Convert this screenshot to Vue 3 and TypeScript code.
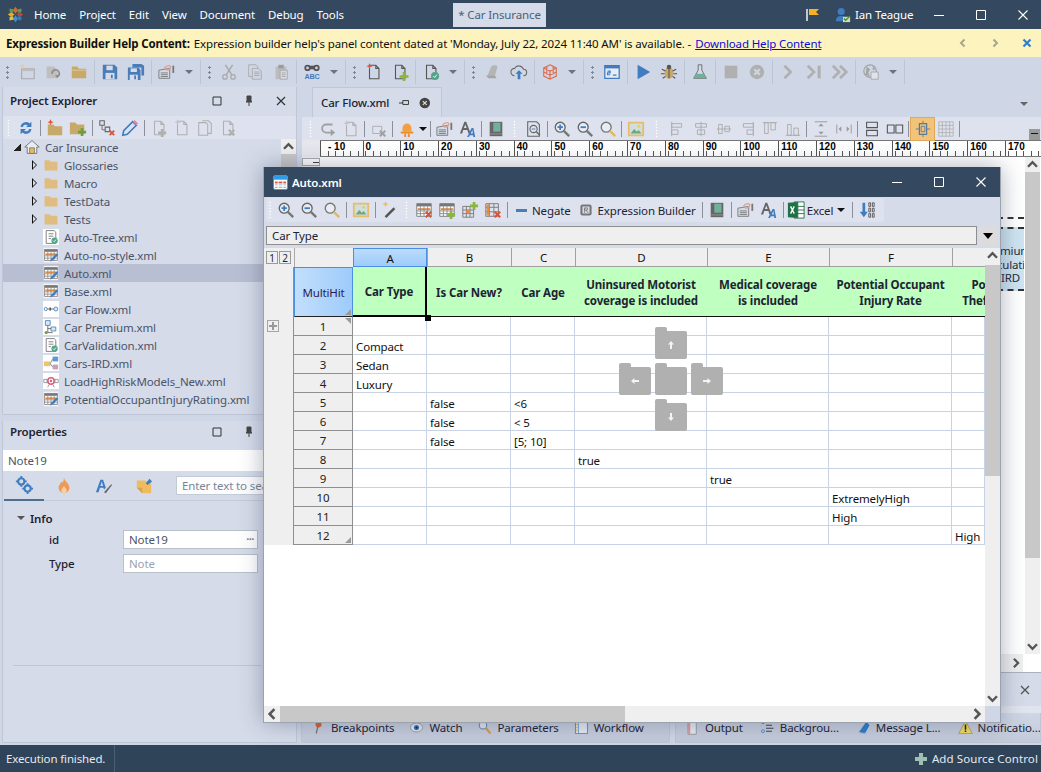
<template>
  <div class="app">
    <header class="titlebar">
      <svg class="logo" viewBox="0 0 20 20">
        <path d="M10 1l3 4-3 4-3-4z" fill="#d9633a" />
        <path d="M1 10l4-3 4 3-4 3z" fill="#e5a92f" />
        <path d="M19 10l-4-3-4 3 4 3z" fill="#c0453f" />
        <path d="M10 19l3-4-3-4-3 4z" fill="#3f8fd0" />
        <path d="M3 3l5 1-1 4-4-1zM17 3l-5 1 1 4 4-1z" fill="#5e9e4a" />
        <path d="M3 17l5-1-1-4-4 1z" fill="#e2c23a" />
        <path d="M17 17l-5-1 1-4 4 1z" fill="#2f7fbf" />
      </svg>
      <nav class="menu">
        <span v-for="m in menu" :key="m">{{ m }}</span>
      </nav>
      <div class="doc-tab">* Car Insurance</div>
      <svg class="flag" viewBox="0 0 14 14">
        <path d="M1 1v12" stroke="#f2f2f2" stroke-width="1.5" />
        <path d="M3 1h10l-3 3 3 3H3z" fill="#f5b324" />
      </svg>
      <svg class="user" viewBox="0 0 18 18">
        <circle cx="7" cy="5" r="4" fill="#3f7cc0" />
        <path d="M1 16c0-5 3-6 6-6s5 1 6 3v3z" fill="#3f7cc0" />
        <path d="M9 11h8v6H9z" fill="#cfe0a0" />
        <path d="M10 13l2 2 5-5" stroke="#3e8e45" stroke-width="1.5" fill="none" />
      </svg>
      <span class="user-name">Ian Teague</span>
      <div class="win-btns">
        <svg viewBox="0 0 12 12"><path d="M1 6.5h10" stroke="#fff" /></svg>
        <svg viewBox="0 0 12 12"><path d="M1.5 1.5h9v9h-9z" stroke="#fff" fill="none" /></svg>
        <svg viewBox="0 0 12 12"><path d="M1.5 1.5l9 9M10.5 1.5l-9 9" stroke="#fff" stroke-width="1.1" /></svg>
      </div>
    </header>

    <div class="notice">
      <b>Expression Builder Help Content:</b>
      <span class="notice-msg">Expression builder help's panel content dated at 'Monday, July 22, 2024 11:40 AM' is available. -</span>
      <a class="notice-link">Download Help Content</a>
      <div class="notice-nav">
        <svg viewBox="0 0 10 10"><path d="M6.5 1.5L3 5l3.5 3.5" stroke="#a7a48f" stroke-width="2" fill="none" /></svg>
        <svg viewBox="0 0 10 10"><path d="M3.5 1.5L7 5 3.5 8.5" stroke="#a7a48f" stroke-width="2" fill="none" /></svg>
        <svg viewBox="0 0 10 10"><path d="M1.5 1.5l7 7M8.5 1.5l-7 7" stroke="#2f7fd0" stroke-width="2.2" /></svg>
      </div>
    </div>

    <div class="toolbar main-tools">
      <template v-for="(t, i) in mainTools" :key="i">
        <i v-if="t === 'g'" class="grip"></i>
        <i v-else-if="t === 's'" class="sep"></i>
        <i v-else-if="t === 'c'" class="caret"></i>
        <span v-else class="btn"><svg class="ic" viewBox="0 0 20 20" v-html="icons[t]"></svg></span>
      </template>
    </div>

    <main class="workspace">
      <aside class="left">
        <section class="explorer">
          <div class="panel-head">
            <strong>Project Explorer</strong>
            <svg viewBox="0 0 12 12"><path d="M2 2h8v8H2z" fill="none" stroke="#333" /></svg>
            <svg viewBox="0 0 12 12"><path d="M4 1h4v5l1 1H3l1-1zM6 7v4" fill="#444" stroke="#444" /></svg>
            <svg viewBox="0 0 12 12"><path d="M2 2l8 8M10 2l-8 8" stroke="#333" stroke-width="1.2" /></svg>
          </div>
          <div class="toolbar sub-tools">
            <template v-for="(t, i) in explorerTools" :key="i">
              <i v-if="t === 'g'" class="grip dotted"></i>
              <i v-else-if="t === 's'" class="sep dark"></i>
              <span v-else class="btn small"><svg class="ic" viewBox="0 0 20 20" v-html="icons[t]"></svg></span>
            </template>
          </div>
          <div class="tree-wrap">
            <ul class="tree">
              <li v-for="n in tree" :key="n.name" class="tree-row" :class="[`lvl-${n.level}`, { selected: n.name === 'Auto.xml' }]">
                <i v-if="n.level === 0" class="arrow open"></i>
                <i v-else-if="n.folder" class="arrow"></i>
                <svg class="tree-ic" viewBox="0 0 20 20" v-html="icons[n.icon]"></svg>
                <span>{{ n.name }}</span>
              </li>
            </ul>
            <div class="vscroll tree-scroll">
              <svg viewBox="0 0 10 10"><path d="M2 6.5L5 3.5l3 3" stroke="#555" stroke-width="1.6" fill="none" /></svg>
              <i class="thumb"></i>
            </div>
          </div>
        </section>

        <section class="props">
          <div class="panel-head">
            <strong>Properties</strong>
            <svg viewBox="0 0 12 12"><path d="M2 2h8v8H2z" fill="none" stroke="#333" /></svg>
            <svg viewBox="0 0 12 12"><path d="M4 1h4v5l1 1H3l1-1zM6 7v4" fill="#444" stroke="#444" /></svg>
            <svg viewBox="0 0 12 12"><path d="M2 2l8 8M10 2l-8 8" stroke="#333" stroke-width="1.2" /></svg>
          </div>
          <div class="props-name">Note19</div>
          <div class="props-tabs">
            <span class="props-tab active"><svg class="ic" viewBox="0 0 20 20" v-html="icons.gears"></svg></span>
            <span class="props-tab"><svg class="ic" viewBox="0 0 20 20" v-html="icons.flame"></svg></span>
            <span class="props-tab"><svg class="ic" viewBox="0 0 20 20" v-html="icons.fontBrush"></svg></span>
            <span class="props-tab"><svg class="ic" viewBox="0 0 20 20" v-html="icons.sticky"></svg></span>
            <div class="props-search">Enter text to search</div>
          </div>
          <div class="props-body">
            <div class="props-group"><i></i>Info</div>
            <div class="props-row">
              <label>id</label>
              <div class="props-val">Note19<em>•••</em></div>
            </div>
            <div class="props-row">
              <label>Type</label>
              <div class="props-val ro">Note</div>
            </div>
            <hr class="props-line" />
          </div>
        </section>
      </aside>

      <div class="right">
        <div class="tabstrip">
          <div class="file-tab">
            <span>Car Flow.xml</span>
            <svg viewBox="0 0 12 12"><path d="M1 6h4M5 3.5h6v4H5z" stroke="#333" fill="none" /></svg>
            <svg viewBox="0 0 12 12"><circle cx="6" cy="6" r="5.5" fill="#444" /><path d="M4 4l4 4M8 4l-4 4" stroke="#ddd" stroke-width="1.3" /></svg>
          </div>
          <i class="strip-caret"></i>
        </div>
        <div class="toolbar editor-tools">
          <template v-for="(t, i) in editorTools" :key="i">
            <i v-if="t === 'g' || t === 'G'" class="grip dotted" :class="{ wide: t === 'G' }"></i>
            <i v-else-if="t === 's'" class="sep dark"></i>
            <i v-else-if="t === 'c'" class="caret black"></i>
            <span v-else class="btn small" :class="{ on: t === 'snap' }"><svg class="ic" viewBox="0 0 20 20" v-html="icons[t]"></svg></span>
          </template>
          <i class="ed-more"></i>
        </div>
        <div class="ruler-row">
          <div class="ruler-corner"></div>
          <div class="ruler">
            <span v-for="r in rulerMarks" :key="r" class="mark" :class="{ first: r === -10 }">{{ r === -10 ? '- 10' : r }}</span>
          </div>
        </div>
        <div class="canvas-row">
          <div class="canvas-gutter"><i></i></div>
          <div class="canvas">
            <div class="note-node">
              <span>Premium</span>
              <span>Calculation</span>
              <span>IRD</span>
            </div>
          </div>
          <div class="vscroll canvas-scroll">
            <svg viewBox="0 0 10 10"><path d="M2 6.5L5 3.5l3 3" stroke="#555" stroke-width="1.6" fill="none" /></svg>
            <i class="thumb"></i>
            <svg class="down" viewBox="0 0 10 10"><path d="M2 3.5L5 6.5l3-3" stroke="#555" stroke-width="1.6" fill="none" /></svg>
          </div>
        </div>
        <div class="canvas-hbar">
          <svg viewBox="0 0 10 10"><path d="M3.5 2L6.5 5l-3 3" stroke="#555" stroke-width="1.6" fill="none" /></svg>
          <i></i>
        </div>
        <div class="bottom">
          <div class="bottom-top">
            <svg viewBox="0 0 12 12"><path d="M2 2l8 8M10 2l-8 8" stroke="#555" stroke-width="1.3" /></svg>
          </div>
          <div class="bottom-strip"></div>
          <div class="bottom-tabs">
            <div class="bottom-group first">
              <span v-for="t in debugTabs" :key="t.label" class="bottom-tab"><svg class="ic" viewBox="0 0 20 20" v-html="icons[t.icon]"></svg>{{ t.label }}</span>
            </div>
            <div class="bottom-group second">
              <span v-for="t in outputTabs" :key="t.label" class="bottom-tab"><svg class="ic" viewBox="0 0 20 20" v-html="icons[t.icon]"></svg>{{ t.label }}</span>
            </div>
          </div>
        </div>
      </div>
    </main>

    <footer class="statusbar">
      <span class="status-msg">Execution finished.</span>
      <span class="status-add">
        <svg viewBox="0 0 12 12"><path d="M4 0h4v4h4v4H8v4H4V8H0V4h4z" fill="#9fc0b0" /></svg>
        Add Source Control
      </span>
    </footer>

    <!-- floating document window -->
    <section class="float-win">
      <div class="float-title">
        <svg class="float-ic" viewBox="0 0 16 16">
          <rect x="0.5" y="0.5" width="15" height="15" rx="2" fill="#fff" stroke="#2f9be8" />
          <path d="M1 1h14v4H1z" fill="#2f9be8" />
          <path d="M2 7h12v2H2z" fill="#e2583a" />
          <path d="M2 10h12v1H2zM2 12.5h12v1H2z" fill="#8fa6c8" />
          <path d="M5.5 6v8M10.5 6v8" stroke="#fff" />
        </svg>
        <strong>Auto.xml</strong>
        <div class="win-btns">
          <svg viewBox="0 0 12 12"><path d="M1 6.5h10" stroke="#fff" /></svg>
          <svg viewBox="0 0 12 12"><path d="M1.5 1.5h9v9h-9z" stroke="#fff" fill="none" /></svg>
          <svg viewBox="0 0 12 12"><path d="M1.5 1.5l9 9M10.5 1.5l-9 9" stroke="#fff" stroke-width="1.1" /></svg>
        </div>
      </div>
      <div class="float-tools">
        <div class="toolbar pill">
          <template v-for="(t, i) in windowTools" :key="i">
            <i v-if="t === 'g'" class="grip dotted"></i>
            <i v-else-if="t === 's'" class="sep dark"></i>
            <i v-else-if="t === 'c'" class="caret black"></i>
            <span v-else-if="t === 'negate'" class="btn text"><i class="minus"></i>Negate</span>
            <span v-else-if="t === 'expr'" class="btn text"><svg class="ic tiny" viewBox="0 0 20 20" v-html="icons.exprBox"></svg>Expression Builder</span>
            <span v-else-if="t === 'excel'" class="btn text tight"><svg class="ic" viewBox="0 0 20 20" v-html="icons.excel"></svg>Excel</span>
            <span v-else class="btn small"><svg class="ic" viewBox="0 0 20 20" v-html="icons[t]"></svg></span>
          </template>
        </div>
      </div>
      <div class="formula">
        <div class="formula-input">Car Type</div>
        <div class="formula-btn"><i></i></div>
      </div>
      <div class="sheet-area">
        <div class="sheet-main">
          <div class="sheet">
            <div class="outline-btns"><span>1</span><span>2</span></div>
            <div class="col-corner"></div>
            <div v-for="(c, i) in columns" :key="i" class="col-head" :class="{ sel: c === 'A' }">{{ c }}</div>

            <div class="outline-cell"></div>
            <div class="multihit">MultiHit<i class="corner"></i></div>
            <div
              v-for="(h, i) in headers"
              :key="i"
              class="green"
              :class="{ active: i === 0 }"
            ><div class="green-inner" :class="{ cut: i === 6 }">
              <span v-for="l in h" :key="l">{{ l }}</span>
            </div></div>

            <template v-for="(row, r) in rows" :key="r">
              <div class="outline-cell"><i v-if="r === 0" class="plus-box"></i></div>
              <div class="row-no">{{ r + 1 }}<i v-if="r === 0" class="corner top"></i><i v-if="r === 11" class="corner"></i></div>
              <div v-for="(v, c) in row" :key="c" class="cell">{{ v }}</div>
            </template>
            <i class="sel-handle"></i>
          </div>
          <div class="dock-guide">
            <i></i>
            <span class="folder"><svg viewBox="0 0 10 10"><path d="M5 1L2 4.5h2V9h2V4.5h2z" fill="#f4f4f4" /></svg></span>
            <i></i>
            <span class="folder"><svg viewBox="0 0 10 10"><path d="M1 5l3.5-3v2H9v2H4.5v2z" fill="#f4f4f4" /></svg></span>
            <span class="folder"></span>
            <span class="folder"><svg viewBox="0 0 10 10"><path d="M9 5L5.500 2v2H1v2h4.500v2z" fill="#f4f4f4" /></svg></span>
            <i></i>
            <span class="folder"><svg viewBox="0 0 10 10"><path d="M5 9L2 5.500h2V1h2v4.500h2z" fill="#f4f4f4" /></svg></span>
            <i></i>
          </div>
        </div>
        <div class="vscroll sheet-v">
          <svg viewBox="0 0 10 10"><path d="M2 6.5L5 3.5l3 3" stroke="#555" stroke-width="1.6" fill="none" /></svg>
          <i class="thumb"></i>
          <svg class="down" viewBox="0 0 10 10"><path d="M2 3.5L5 6.5l3-3" stroke="#555" stroke-width="1.6" fill="none" /></svg>
        </div>
        <div class="hscroll">
          <svg viewBox="0 0 10 10"><path d="M6.5 2L3.5 5l3 3" stroke="#555" stroke-width="1.6" fill="none" /></svg>
          <i class="thumb"></i>
          <svg class="end" viewBox="0 0 10 10"><path d="M3.5 2L6.5 5l-3 3" stroke="#555" stroke-width="1.6" fill="none" /></svg>
        </div>
        <div class="sheet-corner"></div>
      </div>
    </section>
  </div>
</template>

<script setup lang="ts">
const menu = ['Home', 'Project', 'Edit', 'View', 'Document', 'Debug', 'Tools']

const G = '#a9a9a9'
const doc = (c: string) => `<path d="M5 2.5h7l3.500 3.500v11.500H5zM12 2.500V6h3.500" fill="none" stroke="${c}" stroke-width="1.200"/>`
const spark = (c: string) => `<path d="M5 0l1 2.500L8.500 3.500 6 4.500 5 7 4 4.500 1.500 3.500 4 2.500z" fill="${c}"/>`
const grid = `<path d="M2 3h16v14H2z" fill="#fff" stroke="#777"/><path d="M2 3h16v3H2z" fill="#777"/><path d="M3 8h14v2H3z" fill="#e98a3c"/><path d="M2 11h16M2 14h16M6 6v11M10 6v11M14 6v11" stroke="#888" fill="none"/>`
const pencil = `<path d="M9 18l1-3 7-7 2 2-7 7z" fill="#3f7cc0"/>`
const sheetCheck = `<path d="M4 2h10l2 2v14H4z" fill="#fff" stroke="#666"/><path d="M7 6h6M7 9h6M7 12h3" stroke="#666"/><circle cx="14.500" cy="14.500" r="4" fill="#57a38a"/><path d="M12.500 14.500l1.500 1.500 2.500-3" stroke="#fff" fill="none"/>`

const icons: Record<string, string> = {
  newWin: `<path d="M4 6.500h14v11H4z" fill="none" stroke="${G}" stroke-width="1.200"/><path d="M4 6h14v3H4z" fill="#bdbdbd"/>${spark('#d9cdb8')}`,
  openGrey: `<path d="M3 4h8l4 4v9H3z" fill="#bfbfbf"/><path d="M9 12a4 4 0 1 1 6 3" fill="none" stroke="#8d8d8d" stroke-width="1.800"/><path d="M12 14l3 3 2-4z" fill="#8d8d8d"/>`,
  folder: `<path d="M2 4h6l2 2.500h8V17H2z" fill="#c7a96a"/><path d="M2 8h16" stroke="#dfcb9d"/>`,
  save: `<path d="M2 2h13l3 3v13H2z" fill="#4a7db8"/><path d="M6 3h7v5H6z" fill="#d5dbe9"/><path d="M5 11h10v7H5z" fill="#d5dbe9"/><path d="M11 13h2v4h-2z" fill="#4a7db8"/>`,
  saveAll: `<path d="M6 1h10l3 2v11h-3V5H6z" fill="#4a7db8"/><path d="M1 5h12l2 3v11H1z" fill="#4a7db8"/><path d="M4 6h7v4H4z" fill="#d5dbe9"/><path d="M3 13h9v6H3z" fill="#d5dbe9"/><path d="M8 14h2v4H8z" fill="#4a7db8"/>`,
  note: `<path d="M1 8l12-2v11H1z" fill="#d5dbe9" stroke="#777"/><path d="M3 11h8M3 13h8M3 15h8" stroke="#777"/><path d="M7 6c2-3 6-4 7-2s-2 4-5 4" fill="none" stroke="#e2a08c" stroke-width="1.500"/><path d="M16 3h2v8h-2z" fill="#777"/>`,
  cut: `<path d="M6 2l7 11M14 2L7 13" stroke="${G}" stroke-width="1.600"/><circle cx="5.500" cy="15.500" r="2.500" fill="none" stroke="${G}" stroke-width="1.400"/><circle cx="14.500" cy="15.500" r="2.500" fill="none" stroke="${G}" stroke-width="1.400"/>`,
  copy: `<path d="M3 2h8l2 2v11H3z" fill="none" stroke="${G}"/><path d="M7 6h7l3 3v9H7z" fill="#cfd6e6" stroke="${G}"/><path d="M9 10h6M9 12h6M9 14h6" stroke="${G}"/>`,
  paste: `<path d="M4 4h12v14H4z" fill="#bcbcbc"/><path d="M7 2h6v4H7z" fill="#9c9c9c"/><path d="M9 8h8v10H9z" fill="#d4d8e2" stroke="${G}"/><path d="M11 11h4M11 13h4M11 15h4" stroke="${G}"/>`,
  binoc: `<circle cx="5" cy="5.500" r="3.500" fill="#555"/><circle cx="15" cy="5.500" r="3.500" fill="#555"/><path d="M7 3h6v4H7z" fill="#555"/><circle cx="5" cy="5.500" r="1.500" fill="#cfd6e6"/><circle cx="15" cy="5.500" r="1.500" fill="#cfd6e6"/><text x="10" y="18" text-anchor="middle" font-family="Liberation Sans" font-size="8" font-weight="700" fill="#3f7cc0">ABC</text>`,
  newDoc: `${doc('#555')}${spark('#e0553a')}`,
  addDoc: `${doc('#555')}<path d="M13 10h3v3.500h3.500v3H16V20h-3v-3.500H9.500v-3H13z" fill="#8ab53f"/>`,
  checkDoc: `${doc('#555')}<circle cx="14.500" cy="14.500" r="4.500" fill="#57a38a"/><path d="M12.500 14.500l1.500 1.500 2.500-3" stroke="#fff" fill="none"/>`,
  script: `<path d="M4 14l4-10c2-2 6-2 7 0l-3 11z" fill="#b5b5b5"/><path d="M2 14h10l2 3H5z" fill="#a5a5a5"/>`,
  cloud: `<path d="M5 14a4 4 0 0 1 0-8 5.500 5.500 0 0 1 10 1 3.500 3.500 0 0 1 0 7" fill="none" stroke="#666" stroke-width="1.200"/><path d="M10 8l4 4h-2.500v6h-3v-6H6z" fill="#3f7cc0"/>`,
  cube: `<path d="M10 2l7 3.500v9L10 18l-7-3.500v-9zM3 5.500L10 9l7-3.500M10 9v9M6.500 3.800v9M13.500 3.800v9M3 10l7 3.500 7-3.500" fill="none" stroke="#dd6b4d" stroke-width="1.200"/>`,
  console: `<path d="M2 3h16v14H2z" fill="#e8ecf4" stroke="#3f7cc0" stroke-width="1.400"/><path d="M2 3h16v3H2z" fill="#3f7cc0"/><path d="M5 9h3v2H5v2h3M11 13.500h4" fill="none" stroke="#3f7cc0" stroke-width="1.200"/>`,
  play: `<path d="M4 2l14 8-14 8z" fill="#3f7cc0"/>`,
  bug: `<ellipse cx="10" cy="11" rx="5" ry="6.500" fill="#c8a868"/><circle cx="10" cy="4.500" r="2.500" fill="#555"/><path d="M10 5v12M2 7l4 2M18 7l-4 2M1 12h4M19 12h-4M3 17l3-2M17 17l-3-2" stroke="#555" stroke-width="1.200"/>`,
  flask: `<path d="M8 2h4v6l5 9H3l5-9z" fill="#d5dbe9" stroke="#666"/><path d="M6 12h8l2.500 5h-13z" fill="#6fb19b"/>`,
  stop: `<path d="M3 3h14v14H3z" fill="#b0b0b0"/>`,
  xCircle: `<circle cx="10" cy="10" r="8" fill="#b0b0b0"/><path d="M7 7l6 6M13 7l-6 6" stroke="#cfd6e6" stroke-width="2.200"/>`,
  next: `<path d="M6 3l7 7-7 7" fill="none" stroke="#b0b0b0" stroke-width="3"/>`,
  step: `<path d="M3 3l7 7-7 7" fill="none" stroke="#b0b0b0" stroke-width="3"/><path d="M14 3h3.500v14H14z" fill="#b0b0b0"/>`,
  fwd: `<path d="M2 3l7 7-7 7M10 3l7 7-7 7" fill="none" stroke="#b0b0b0" stroke-width="3"/>`,
  globe: `<circle cx="9" cy="9" r="7" fill="none" stroke="#a5a5a5" stroke-width="1.400"/><path d="M5 4l4 3-2 4 2 4-5-2zM12 3l3 4-3 1z" fill="#a5a5a5"/><path d="M10 10h8v8h-8z" fill="#dfe3ed" stroke="#a5a5a5"/>`,
  refresh: `<path d="M4 9a6 6 0 0 1 10-4l2-2v6h-6l2-2a3.500 3.500 0 0 0-5.500 2zM16 11a6 6 0 0 1-10 4l-2 2v-6h6l-2 2a3.500 3.500 0 0 0 5.500-2z" fill="#3f7cc0"/>`,
  newFolder: `<path d="M2 6h6l2 2h8v10H2z" fill="#c7a96a"/>${spark('#e0553a')}`,
  addFolder: `<path d="M1 4h6l2 2h8v11H1z" fill="#c7a96a"/><path d="M13 10h3v3h3v3h-3v3h-3v-3h-3v-3h3z" fill="#6f9e3a"/>`,
  treeX: `<path d="M2 2h5v5H2zM8 9h5v5H8z" fill="none" stroke="#666" stroke-width="1.200"/><path d="M4.500 7v5H8" fill="none" stroke="#666"/><path d="M13 13l5 5M18 13l-5 5" stroke="#d9533a" stroke-width="2"/>`,
  pencil: `<path d="M2 18l1-5L13 3l4 4L7 17z" fill="none" stroke="#3f7cc0" stroke-width="1.800"/><path d="M13 3l2-2 4 4-2 2z" fill="#d58aa0"/>`,
  docPlus: `${doc('#b0b0b0')}<path d="M12 11h3v3h3v3h-3v3h-3v-3H9v-3h3z" fill="#b0b0b0"/>`,
  docStar: `${doc('#b0b0b0')}${spark('#c4c4c4')}`,
  docCopy: `<path d="M3 4h8l2 2v12H3z" fill="none" stroke="#b0b0b0" stroke-width="1.200"/><path d="M7 2h7l3 3v11h-4" fill="none" stroke="#b0b0b0" stroke-width="1.200"/>`,
  docX: `${doc('#b0b0b0')}<path d="M11 12l6 6M17 12l-6 6" stroke="#b0b0b0" stroke-width="2.400"/>`,
  undo: `<path d="M15 5H8a4.500 4.500 0 0 0 0 9h6" fill="none" stroke="#a0a0a0" stroke-width="2"/><path d="M13 10l5 4-5 4z" fill="#a0a0a0"/>`,
  nodeX: `<path d="M3 7h10v8H3z" fill="none" stroke="#aaa"/><path d="M11 12l6 6M17 12l-6 6" stroke="#a0a0a0" stroke-width="2.200"/>`,
  led: `<path d="M5 9a5 5 0 0 1 10 0v4H5z" fill="#f0a040"/><path d="M3 13h14v2H3z" fill="#e88d2a"/><path d="M7 15h2v4H7zM11 15h2v4h-2z" fill="#e88d2a"/>`,
  fontA: `<path d="M1 15L6 2h2l5 13h-2.500L9.300 11H4.700l-1.200 4zM5.500 9h3L7 5z" fill="#666"/><path d="M9 19l5-10h2l2 10h-2l-.4-2h-3.500l-1 2zM13 15h2.300L15 11z" fill="#3f7cc0"/>`,
  book: `<path d="M3 2h14v16H3z" fill="#666"/><path d="M7 3h8v10H7z" fill="#6fb19b"/><path d="M3 15h14v1H3z" fill="#999"/>`,
  zoomDoc: `<path d="M3 2h10l3 3v13H3z" fill="none" stroke="#666" stroke-width="1.200"/><circle cx="9.500" cy="10" r="4" fill="#dde2ee" stroke="#666" stroke-width="1.200"/><path d="M7.500 10h4" stroke="#3f7cc0"/><path d="M12.500 13l4 4" stroke="#666" stroke-width="1.600"/>`,
  zoomIn: `<circle cx="8" cy="8" r="5.500" fill="#e8ecf4" stroke="#666" stroke-width="1.500"/><path d="M5 8h6M8 5v6" stroke="#3f7cc0" stroke-width="2"/><path d="M12 12l6 6" stroke="#777" stroke-width="2.600"/>`,
  zoomOut: `<circle cx="8" cy="8" r="5.500" fill="#e8ecf4" stroke="#666" stroke-width="1.500"/><path d="M5 8h6" stroke="#3f7cc0" stroke-width="2"/><path d="M12 12l6 6" stroke="#777" stroke-width="2.600"/>`,
  zoomFit: `<circle cx="8" cy="8" r="5.500" fill="#e8ecf4" stroke="#777" stroke-width="1.500"/><path d="M12 12l6 6" stroke="#e0b860" stroke-width="2.600"/>`,
  image: `<path d="M2 3h16v14H2z" fill="#cfe0dc" stroke="#e8bc6a" stroke-width="2"/><path d="M4 15l4-5 3 3 2-2 3 4z" fill="#6fa87a"/><circle cx="13" cy="7" r="1.500" fill="#f0c860"/>`,
  alignL: `<path d="M3 2v16" stroke="#aaa"/><path d="M3 4h11v4H3zM3 11h7v5H3z" fill="none" stroke="#aaa"/>`,
  alignC: `<path d="M10 2v16" stroke="#aaa"/><path d="M4 4h12v4H4zM6 11h8v5H6z" fill="none" stroke="#aaa"/>`,
  alignM: `<path d="M2 10h16" stroke="#aaa"/><path d="M4 5h4v10H4zM11 7h5v6h-5z" fill="none" stroke="#aaa"/>`,
  alignR: `<path d="M17 2v16" stroke="#aaa"/><path d="M6 4h11v4H6zM10 11h7v5h-7z" fill="none" stroke="#aaa"/>`,
  alignT: `<path d="M2 3h16" stroke="#aaa"/><path d="M4 3h4v12H4zM11 3h5v8h-5z" fill="none" stroke="#aaa"/>`,
  alignB: `<path d="M2 17h16" stroke="#aaa"/><path d="M4 5h4v12H4zM11 9h5v8h-5z" fill="none" stroke="#aaa"/>`,
  distV: `<path d="M3 2h14M3 18h14" stroke="#999"/><path d="M10 4l3 3H7zM10 16l3-3H7z" fill="#999"/>`,
  distH: `<path d="M2 5v10M18 5v10" stroke="#999"/><path d="M4 10l3-3v6zM16 10l-3-3v6z" fill="#999"/>`,
  stackV: `<path d="M4 2.500h12v6H4zM4 11.500h12v6H4z" fill="none" stroke="#555" stroke-width="1.200"/>`,
  stackH: `<path d="M1.500 5.500h7.500v9H1.500zM11 5.500h7.500v9H11z" fill="none" stroke="#555" stroke-width="1.200"/>`,
  snap: `<path d="M6 4h8v12H6z" fill="none" stroke="#5a7a9a" stroke-width="1.400"/><path d="M8 7h4v6H8zM10 1v3M10 16v3M2 10h4M14 10h4" fill="none" stroke="#5a7a9a"/>`,
  gridOff: `<path d="M2 2h16v16H2zM2 6h16M2 10h16M2 14h16M6 2v16M10 2v16M14 2v16" fill="none" stroke="#b4b4b4"/>`,
  wand: `<path d="M4 17L14 7l2 2L6 19z" fill="#555"/><path d="M14 7l2-2 2 2-2 2z" fill="#ddd"/>${spark('#e8bc6a')}`,
  gridX: `${grid}<path d="M12 12l6 6M18 12l-6 6" stroke="#d9533a" stroke-width="2.200"/>`,
  gridPlus: `${grid}<path d="M13 11h3v3h3v3h-3v3h-3v-3h-3v-3h3z" fill="#8ab53f"/>`,
  gridColAdd: `<path d="M2 6h12v12H2zM6 6v12M10 6v12M2 10h12M2 14h12" fill="none" stroke="#777"/><path d="M6 10h4v4H6z" fill="#e98a3c"/><path d="M13 1h3v3h3v3h-3v3h-3V7h-3V4h3z" fill="#8ab53f"/>`,
  gridColX: `<path d="M2 3h14v14H2zM6 3v14M11 3v14M2 7h14M2 12h14" fill="none" stroke="#777"/><path d="M3 4h3v12H3z" fill="#e98a3c"/><path d="M12 12l6 6M18 12l-6 6" stroke="#d9533a" stroke-width="2.200"/>`,
  exprBox: `<rect x="2" y="2" width="16" height="16" rx="3" fill="#777"/><rect x="5" y="5" width="10" height="10" fill="#d5dbe9"/><path d="M8 7h4v3H8zM8 7v7M10 10l3 4" fill="none" stroke="#777" stroke-width="1.200"/>`,
  excel: `<path d="M8 1h11v18H8z" fill="#fff" stroke="#1f7145"/><path d="M12 1v18M8 6h11M8 10h11M8 14h11" stroke="#1f7145"/><path d="M1 2l11-1v18L1 18z" fill="#1f7145"/><path d="M4 6l4 8M8 6l-4 8" stroke="#fff" stroke-width="1.500"/>`,
  sortBits: `<path d="M5 2h3v10h3l-4.500 6L2 12h3z" fill="#3f7cc0"/><path d="M12 2h2v4h-2zM16 2h2v4h-2zM12 8h2v4h-2zM16 8h2v4h-2zM12 14h2v4h-2zM16 14h2v4h-2z" fill="none" stroke="#555"/>`,
  gears: `<circle cx="7" cy="6" r="3.500" fill="none" stroke="#3f7cc0" stroke-width="2.400"/><circle cx="14" cy="14" r="3.500" fill="none" stroke="#3f7cc0" stroke-width="2.400"/><path d="M7 0v2M7 10v2M1 6h2M11 6h2M14 8v2M14 18v2M8 14h2M18 14h2" stroke="#3f7cc0" stroke-width="2"/>`,
  flame: `<path d="M10 1c1 4 6 6 6 11a6 6 0 0 1-12 0c0-3 2-4 3-7 1 2 2 2 3-4z" fill="#ee9a55"/><path d="M10 10c1 2 3 3 3 5a3 3 0 0 1-6 0c0-2 2-3 3-5z" fill="#f7cfa8"/>`,
  fontBrush: `<path d="M1 17L6 3h3l3 9-2 2-.6-2H5.500L4 17zM6 10h3L7.500 5z" fill="#3f7cc0"/><path d="M10 17l8-9 1 1-7 9z" fill="#666"/>`,
  sticky: `<path d="M2 4h10l2 3h4v11H8l-6-6z" fill="#eebb5e"/><path d="M2 12h6v6z" fill="#d8a44a"/><path d="M12 7l4-5 3 3-5 4z" fill="#3f7cc0"/>`,
  home: `<path d="M10 2L1 10h3v8h12v-8h3z" fill="#e8ecf4" stroke="#777" stroke-width="1.200"/><path d="M7 11h6v7H7z" fill="#eab75a" stroke="#777"/>`,
  treeFolder: `<path d="M2 4h6l2 2h8v11H2z" fill="#e0bd7e"/>`,
  tableEdit: `<path d="M1 1h18v18H1z" fill="#fff"/>${grid}${pencil}`,
  ruleDoc: `<path d="M0 0h20v20H0z" fill="#fff"/>${sheetCheck}`,
  flow: `<path d="M0 0h20v20H0z" fill="#fff"/><circle cx="3.500" cy="10" r="2" fill="none" stroke="#3f7cc0"/><path d="M5.500 10H14" stroke="#555"/><circle cx="16" cy="10" r="2.500" fill="#dce6f4" stroke="#3f7cc0"/><path d="M9 8v4" stroke="#555" stroke-width="2"/>`,
  tree: `<path d="M0 0h20v20H0z" fill="#fff"/><path d="M3 2h6v6H3z" fill="#dce6f4" stroke="#3f7cc0"/><path d="M10 10h6v5h-6z" fill="#dce6f4" stroke="#3f7cc0"/><path d="M6 8v9h6M6 12h4" fill="none" stroke="#555"/><circle cx="4" cy="17" r="2" fill="#6f9e3a"/>`,
  ird: `<path d="M0 0h20v20H0z" fill="#fff"/><path d="M1 8h8v6H1z" fill="#eec66a"/><path d="M12 2h7v6h-7z" fill="#5e9ad0"/><path d="M12 12h7v6h-7z" fill="#c8a0b8"/><path d="M9 11l3-6M9 11l3 4" stroke="#777"/>`,
  loadRisk: `<path d="M0 0h20v20H0z" fill="#fff"/><circle cx="10" cy="10" r="4" fill="none" stroke="#d9607a" stroke-width="2"/><circle cx="10" cy="10" r="1.500" fill="#d9607a"/><path d="M1 8h4v4H1zM15 8h4v4h-4z" fill="none" stroke="#888"/><path d="M7 15l-1 3M13 15l1 3" stroke="#888"/>`,
  breakpoint: `<circle cx="10" cy="6" r="4" fill="#d9633a"/><path d="M9 9l-2 9" stroke="#777" stroke-width="1.600"/>`,
  watch: `<ellipse cx="10" cy="10" rx="8" ry="6" fill="#e8ecf4" stroke="#888"/><circle cx="10" cy="10" r="3.500" fill="#3f7cc0"/><circle cx="10" cy="10" r="1.500" fill="#223"/>`,
  params: `<circle cx="8" cy="7" r="5" fill="#dce6f4" stroke="#7a8aa0" stroke-width="1.500"/><path d="M12 11l6 7" stroke="#d99a50" stroke-width="2.800"/>`,
  workflow: `<path d="M2 2h16v16H2z" fill="#e8ecf4" stroke="#5e9ad0" stroke-width="1.400"/><path d="M6 2v16" stroke="#5e9ad0"/><path d="M3 5h2v2H3zM3 9h2v2H3zM3 13h2v2H3z" fill="#e8bc40"/>`,
  output: `<path d="M4 1h11v18H4z" fill="#e8ecf4" stroke="#888"/><path d="M4 1h3v18H4z" fill="#d9a0a0"/>`,
  background: `<circle cx="4" cy="3" r="2" fill="none" stroke="#3f7cc0"/><circle cx="4" cy="15" r="2" fill="none" stroke="#3f7cc0"/><path d="M8 3h10M8 7h8M8 11h10M8 15h8" stroke="#444" stroke-width="1.400"/>`,
  message: `<path d="M4 16L14 2l4 5-6 11z" fill="#2f7fc8"/><path d="M2 17l10 2 2-2z" fill="#9ab8d8"/>`,
  warn: `<path d="M10 1l9 17H1z" fill="#f2dc5e" stroke="#a89a50"/><path d="M9 6h2v7H9zM9 14h2v2H9z" fill="#222"/>`
}

const mainTools = ['g', 'newWin', 'openGrey', 'folder', 's', 'save', 'saveAll', 's', 'note', 'c', 's', 'g', 'cut', 'copy', 'paste', 's', 'binoc', 'c', 's', 'g', 'newDoc', 'addDoc', 's', 'checkDoc', 'c', 's', 'g', 'script', 'cloud', 's', 'cube', 'c', 's', 'g', 'console', 's', 'play', 'bug', 's', 'flask', 's', 'stop', 'xCircle', 's', 'next', 'step', 'fwd', 's', 'globe', 'c', 's']
const explorerTools = ['g', 'refresh', 's', 'newFolder', 'addFolder', 's', 'treeX', 'pencil', 's', 'docPlus', 'docStar', 'docCopy', 'docX']
const editorTools = ['g', 'undo', 'docStar', 's', 'nodeX', 's', 'led', 'c', 's', 'note', 'fontA', 's', 'book', 'g', 'zoomDoc', 's', 'zoomIn', 'zoomOut', 'zoomFit', 's', 'image', 'G', 'alignL', 'alignC', 'alignM', 'alignR', 'alignT', 'alignB', 's', 'distV', 'distH', 's', 'stackV', 'stackH', 's', 'snap', 'gridOff', 's']
const windowTools = ['g', 'zoomIn', 'zoomOut', 'zoomFit', 's', 'image', 's', 'wand', 'g', 'gridX', 'gridPlus', 'gridColAdd', 'gridColX', 's', 'negate', 'expr', 's', 'book', 's', 'note', 'fontA', 's', 'excel', 'c', 's', 'sortBits']

interface TreeNode {
  name: string
  level: number
  icon: string
  folder?: boolean
}

const tree: TreeNode[] = [
  { name: 'Car Insurance', level: 0, icon: 'home' },
  { name: 'Glossaries', level: 1, icon: 'treeFolder', folder: true },
  { name: 'Macro', level: 1, icon: 'treeFolder', folder: true },
  { name: 'TestData', level: 1, icon: 'treeFolder', folder: true },
  { name: 'Tests', level: 1, icon: 'treeFolder', folder: true },
  { name: 'Auto-Tree.xml', level: 2, icon: 'ruleDoc' },
  { name: 'Auto-no-style.xml', level: 2, icon: 'tableEdit' },
  { name: 'Auto.xml', level: 2, icon: 'tableEdit' },
  { name: 'Base.xml', level: 2, icon: 'tableEdit' },
  { name: 'Car Flow.xml', level: 2, icon: 'flow' },
  { name: 'Car Premium.xml', level: 2, icon: 'tree' },
  { name: 'CarValidation.xml', level: 2, icon: 'ruleDoc' },
  { name: 'Cars-IRD.xml', level: 2, icon: 'ird' },
  { name: 'LoadHighRiskModels_New.xml', level: 2, icon: 'loadRisk' },
  { name: 'PotentialOccupantInjuryRating.xml', level: 2, icon: 'tableEdit' }
]

const rulerMarks = [-10, 0, 10, 20, 30, 40, 50, 60, 70, 80, 90, 100, 110, 120, 130, 140, 150, 160, 170]

const debugTabs = [
  { label: 'Breakpoints', icon: 'breakpoint' },
  { label: 'Watch', icon: 'watch' },
  { label: 'Parameters', icon: 'params' },
  { label: 'Workflow', icon: 'workflow' }
]
const outputTabs = [
  { label: 'Output', icon: 'output' },
  { label: 'Backgrou...', icon: 'background' },
  { label: 'Message L...', icon: 'message' },
  { label: 'Notificatio...', icon: 'warn' }
]

// the last column's letter sits past the clip edge
const columns = ['A', 'B', 'C', 'D', 'E', 'F', '']
const headers = [
  ['Car Type'],
  ['Is Car New?'],
  ['Car Age'],
  ['Uninsured Motorist', 'coverage is included'],
  ['Medical coverage', 'is included'],
  ['Potential Occupant', 'Injury Rate'],
  ['Potential', 'Theft Rating']
]

const emptyRow = ['', '', '', '', '', '', '']
const withCell = (col: number, val: string) => emptyRow.map((v, i) => (i === col ? val : v))
const rows: string[][] = [
  emptyRow,
  withCell(0, 'Compact'),
  withCell(0, 'Sedan'),
  withCell(0, 'Luxury'),
  ['', 'false', '<6', '', '', '', ''],
  ['', 'false', '< 5', '', '', '', ''],
  ['', 'false', '[5; 10]', '', '', '', ''],
  withCell(3, 'true'),
  withCell(4, 'true'),
  withCell(5, 'ExtremelyHigh'),
  withCell(5, 'High'),
  withCell(6, 'High')
]
</script>

<style>
html,
body {
  margin: 0;
  background: #cfd6e6;
}
</style>

<style scoped>
.app {
  position: relative;
  width: 1041px;
  height: 772px;
  overflow: hidden;
  display: flex;
  flex-direction: column;
  background: #cfd6e6;
  color: #1d2333;
  font: 11.5px "Noto Sans", sans-serif;
  letter-spacing: -0.13px;
}

i {
  display: block;
  font-style: normal;
}

/* title bar */
.titlebar {
  height: 29px;
  flex: none;
  display: flex;
  align-items: center;
  background: #34495f;
  color: #fff;
  padding-left: 7px;
}
.logo {
  width: 17px;
  height: 17px;
  margin-right: 10px;
}
.menu {
  display: flex;
  gap: 13px;
  width: 419px;
  flex: none;
}
.doc-tab {
  width: 93px;
  height: 24px;
  line-height: 24px;
  text-align: center;
  background: #d5dbe9;
  color: #4c6078;
}
.flag {
  width: 14px;
  height: 14px;
  margin-left: 260px;
}
.user {
  width: 16px;
  height: 16px;
  margin-left: 15px;
}
.user-name {
  margin-left: 4px;
  width: 60px;
  white-space: nowrap;
}
.win-btns {
  margin-left: auto;
  display: flex;
  gap: 30px;
  padding-right: 12px;
}
.win-btns svg {
  width: 12px;
  height: 12px;
}

/* notification */
.notice {
  height: 28px;
  flex: none;
  display: flex;
  align-items: center;
  gap: 4px;
  padding-left: 6px;
  background: #fdf3bf;
  color: #111;
}
.notice-link {
  color: #0b0bd8;
  text-decoration: underline;
}
.notice-nav {
  margin-left: auto;
  display: flex;
  gap: 22px;
  padding-right: 9px;
}
.notice-nav svg {
  width: 10px;
  height: 10px;
}

/* toolbars */
.toolbar {
  display: flex;
  align-items: center;
}
.main-tools {
  height: 29px;
  flex: none;
  padding-left: 1px;
}
.grip {
  width: 13px;
  height: 14px;
  background: radial-gradient(circle, #7d8798 1.1px, transparent 1.3px) center top / 13px 5px repeat-y;
}
.grip.dotted {
  height: 18px;
  width: 11px;
  background: radial-gradient(circle, #fff 0.9px, #aeb6c6 1.2px, transparent 1.3px) center top / 11px 3px repeat-y;
}
.editor-tools .grip:not(:first-child) {
  margin: 0 2px;
}
.editor-tools .grip.wide {
  margin: 0 4px;
}
.pill .grip:first-child {
  width: 8px;
}
.sep {
  width: 1px;
  height: 24px;
  margin: 0 2px;
  background: #bcc6d2;
}
.sep.dark {
  height: 16px;
  background: #8a8f9a;
  margin: 0 2.5px;
}
.editor-tools .sep.dark {
  margin: 0 2px;
}
.caret {
  width: 18px;
  height: 4px;
  position: relative;
}
.caret::after {
  content: "";
  position: absolute;
  left: 5px;
  top: 0;
  border: 4px solid transparent;
  border-top-color: #6c7280;
  border-bottom: 0;
}
.caret.black {
  width: 10px;
}
.pill .caret.black {
  width: 13px;
}
.caret.black::after {
  left: 1px;
  border-top-color: #111;
}
.btn {
  width: 26px;
  height: 22px;
  flex: none;
  display: flex;
  align-items: center;
  justify-content: center;
}
.btn.small {
  width: 23px;
}
.btn.on {
  background: #f2c47a;
  outline: 1px solid #e2a85a;
  height: 22px;
}
.btn.text {
  width: auto;
  gap: 5px;
  padding: 0 4px;
}
.btn.text:nth-child(n) .minus {
  margin-left: 2px;
}
.btn.text.tight {
  gap: 2px;
  padding: 0 3px;
  margin-left: -3px;
}
.ic {
  width: 18px;
  height: 18px;
  flex: none;
}
.ic.tiny {
  width: 14px;
  height: 14px;
}
.minus {
  width: 11px;
  height: 3px;
  background: #4a7db8;
}

/* workspace */
.workspace {
  flex: 1;
  min-height: 0;
  display: grid;
  grid-template-columns: 298px 1fr;
}
.left {
  display: flex;
  flex-direction: column;
  gap: 6px;
  padding: 1px 0 2px 2px;
  min-height: 0;
}
.explorer,
.props {
  display: flex;
  flex-direction: column;
  background: #d5dbe9;
  border: 1px solid #bfc6d6;
  border-top: 0;
  margin-right: 1px;
}
.explorer {
  height: 327px;
}
.props {
  flex: 1;
  min-height: 0;
}
.panel-head {
  height: 29px;
  flex: none;
  box-sizing: border-box;
  display: flex;
  align-items: center;
  padding: 0 0 2px 7px;
}
.panel-head strong {
  flex: 1;
  font-weight: 600;
}
.panel-head svg {
  width: 12px;
  height: 12px;
  margin-right: 20px;
}
.panel-head svg:last-child {
  margin-right: 9px;
}
.sub-tools {
  height: 23px;
  flex: none;
  background: #dde2ee;
  border-radius: 3px;
}
.tree-wrap {
  flex: 1;
  min-height: 0;
  display: flex;
}
.tree {
  list-style: none;
  margin: -1px 0 0;
  padding: 0;
  flex: 1;
  overflow: hidden;
}
.tree-row {
  height: 18px;
  display: flex;
  align-items: center;
  color: #4a5468;
  position: relative;
  white-space: nowrap;
}
.tree-row.selected {
  background: #b8bfd3;
}
.lvl-0 {
  padding-left: 11px;
}
.lvl-0 .arrow {
  margin-right: 3px;
}
.lvl-1 {
  padding-left: 29px;
}
.lvl-2 {
  padding-left: 40px;
}
.arrow {
  width: 0;
  height: 0;
  border: 5px solid transparent;
  border-left: 5px solid #111;
  margin-right: 1px;
  position: relative;
  flex: none;
}
.arrow::after {
  content: "";
  position: absolute;
  left: -4px;
  top: -3.5px;
  border: 3.5px solid transparent;
  border-left: 3.5px solid #d5dbe9;
}
.arrow.open {
  width: 7px;
  height: 7px;
  border: 0;
  background: linear-gradient(135deg, transparent 50%, #222 50%);
}
.arrow.open::after {
  display: none;
}
.tree-ic {
  width: 16px;
  height: 16px;
  margin-right: 5px;
  flex: none;
}
.vscroll {
  width: 15px;
  flex: none;
  background: #efefef;
  display: flex;
  flex-direction: column;
  position: relative;
}
.vscroll svg {
  width: 15px;
  height: 15px;
  flex: none;
}
.vscroll .thumb {
  background: #c8c8c8;
}
.vscroll .down {
  margin-top: auto;
}
.tree-scroll .thumb {
  flex: 1;
}

/* properties */
.props .panel-head {
  height: 24px;
  padding-bottom: 3px;
}
.props-name {
  margin-top: 5px;
  height: 21px;
  line-height: 21px;
  background: #fff;
  padding-left: 5px;
  color: #4a5468;
}
.props-tabs {
  height: 29px;
  flex: none;
  display: flex;
  align-items: center;
  border-bottom: 1px solid #c3cad8;
  margin-left: 1px;
  position: relative;
}
.props-tab {
  width: 40px;
  height: 29px;
  display: flex;
  align-items: center;
  justify-content: center;
  box-sizing: border-box;
}
.props-tab.active {
  border-bottom: 2px solid #4f6f8f;
  margin-bottom: -1px;
}
.props-search {
  margin-left: 12px;
  width: 120px;
  height: 19px;
  line-height: 18px;
  box-sizing: border-box;
  background: #fdfdfe;
  border: 1px solid #c3cad8;
  padding-left: 5px;
  color: #7a8498;
  white-space: nowrap;
  overflow: hidden;
}
.props-body {
  flex: 1;
}
.props-group {
  display: flex;
  align-items: center;
  margin: 10px 0 0 14px;
  font-weight: 600;
  height: 14px;
}
.props-group i {
  border: 4px solid transparent;
  border-top-color: #555;
  border-bottom: 0;
  margin-right: 5px;
}
.props-row {
  display: flex;
  align-items: center;
  margin-top: 5px;
  height: 19px;
  padding-left: 46px;
  font-weight: 500;
}
.props-row label {
  width: 74px;
  flex: none;
}
.props-val {
  width: 135px;
  height: 19px;
  line-height: 17px;
  box-sizing: border-box;
  border: 1px solid #b8c0c8;
  background: #fff;
  padding-left: 5px;
  font-weight: 400;
  color: #4a5468;
  display: flex;
  justify-content: space-between;
}
.props-val em {
  font-style: normal;
  font-size: 7px;
  color: #777;
  padding-right: 3px;
}
.props-val.ro {
  color: #9aa2b2;
}
.props-line {
  border: 0;
  border-top: 1px solid #bfc6d6;
  margin: 92px 0 0 10px;
  width: 249px;
}

/* right side */
.right {
  display: flex;
  flex-direction: column;
  min-height: 0;
  min-width: 0;
}
.tabstrip {
  height: 31px;
  flex: none;
  display: flex;
  align-items: flex-end;
  padding-left: 14px;
  position: relative;
}
.file-tab {
  width: 130px;
  height: 30px;
  box-sizing: border-box;
  display: flex;
  align-items: center;
  background: #d5dbe9;
  border: 1px solid #bfc6d6;
  border-bottom: 0;
  padding-left: 8px;
  font-weight: 500;
}
.file-tab span {
  width: 80px;
  white-space: nowrap;
}
.file-tab svg {
  width: 12px;
  height: 12px;
  margin-right: 10px;
}
.strip-caret {
  margin: 0 13px 11px auto;
  border: 4px solid transparent;
  border-top-color: #666;
  border-bottom: 0;
}
.editor-tools {
  height: 23px;
  flex: none;
  margin-left: 4px;
  background: #dde2ee;
  position: relative;
  padding-left: 3px;
}
.ed-more {
  position: absolute;
  right: 1px;
  bottom: 0;
  width: 11px;
  height: 11px;
  background: #9a9a9a linear-gradient(#111, #111) center 4px / 7px 1px no-repeat;
}
.ruler-row {
  height: 17px;
  flex: none;
  display: flex;
}
.ruler-corner {
  width: 18px;
  background: #e6e8ee;
  margin-left: 4px;
  flex: none;
}
.ruler {
  flex: 1;
  display: flex;
  background: #fff repeating-linear-gradient(90deg, #555 0 1px, transparent 1px 7.56px) 0 bottom / 100% 5px no-repeat;
  border-top: 1px solid #777;
  border-bottom: 1px solid #777;
  box-sizing: border-box;
  overflow: hidden;
}
.mark {
  width: 37.8px;
  flex: none;
  box-sizing: border-box;
  border-left: 1px solid #555;
  font: bold 10px/12px "Liberation Sans", sans-serif;
  letter-spacing: 0;
  padding-left: 2px;
  color: #000;
}
.mark.first {
  width: 42.5px;
  padding-left: 7px;
}
.canvas-row {
  flex: 1;
  min-height: 0;
  display: flex;
  background: #fff;
  margin-left: 4px;
}
.canvas-gutter {
  width: 18px;
  flex: none;
  background: #f2f2f2;
}
.canvas-gutter i {
  height: 6px;
  margin-top: 1px;
  border: 1px solid #aaa;
  background: linear-gradient(#444, #444) right center / 6px 1px no-repeat #fff;
}
.canvas {
  flex: 1;
  position: relative;
  overflow: hidden;
}
.note-node {
  position: absolute;
  right: 0;
  top: 70px;
  width: 90px;
  height: 64px;
  box-sizing: border-box;
  background: #cfe5f2;
  border-top: 2px dashed #333;
  border-bottom: 2px dashed #333;
  padding-top: 15px;
  line-height: 13.5px;
  display: flex;
  flex-direction: column;
  align-items: flex-end;
  color: #2a2a3a;
}
.note-node::before {
  content: "";
  position: absolute;
  left: 0;
  right: 0;
  top: -12px;
  border-top: 2px dashed #333;
}
.note-node span {
  white-space: nowrap;
}
.note-node span:nth-child(1) {
  margin-right: -7px;
}
.note-node span:nth-child(2) {
  margin-right: -15px;
}
.note-node span:nth-child(3) {
  margin-right: 4px;
}
.canvas-scroll {
  margin-right: 1px;
  margin-left: 1px;
}
.canvas-scroll .thumb {
  height: 386px;
}
.canvas-hbar {
  height: 18px;
  flex: none;
  display: flex;
  justify-content: flex-end;
  background: #efefef;
  margin-left: 4px;
}
.canvas-hbar svg {
  width: 14px;
  height: 18px;
}
.canvas-hbar i {
  width: 18px;
  background: #fff;
}
.bottom {
  height: 73px;
  flex: none;
  display: flex;
  flex-direction: column;
  background: #d5dbe9;
  border-top: 1px solid #aab2c2;
  box-sizing: border-box;
}
.bottom-top {
  height: 33px;
  display: flex;
  align-items: center;
  justify-content: flex-end;
  padding-right: 10px;
}
.bottom-top svg {
  width: 12px;
  height: 12px;
}
.bottom-strip {
  height: 7px;
  background: #e0e4ee;
}
.bottom-tabs {
  flex: 1;
  display: flex;
  gap: 5px;
  padding: 0 0 2px 3px;
  background: #cfd6e6;
}
.bottom-group {
  display: flex;
  align-items: flex-end;
  border: 1px solid #bfc6d6;
  border-top: 0;
  box-sizing: border-box;
  padding-bottom: 7px;
  background: linear-gradient(#cfd6e6, #c3cad9);
  white-space: nowrap;
  overflow: hidden;
}
.bottom-group.first {
  width: 369px;
  padding-left: 9px;
  gap: 15px;
}
.bottom-group.second {
  flex: 1;
  padding-left: 9px;
  gap: 17px;
}
.bottom-tab {
  display: flex;
  align-items: center;
  gap: 5px;
  height: 16px;
}
.bottom-tab .ic {
  width: 15px;
  height: 15px;
}

/* status bar */
.statusbar {
  height: 27px;
  flex: none;
  display: flex;
  align-items: center;
  justify-content: space-between;
  background: #2f4359;
  color: #e6eaf0;
}
.status-msg {
  width: 108px;
  padding-left: 6px;
  line-height: 27px;
  border-right: 1px solid #4b5e74;
}
.status-add {
  display: flex;
  align-items: center;
  gap: 5px;
  padding-right: 3px;
  letter-spacing: 0.1px;
}
.status-add svg {
  width: 12px;
  height: 12px;
}

/* floating window */
.float-win {
  position: absolute;
  left: 263px;
  top: 167px;
  width: 738px;
  height: 556px;
  box-sizing: border-box;
  display: flex;
  flex-direction: column;
  background: #fff;
  border: 1px solid #9aa3ae;
  border-top: 0;
  box-shadow: 0 0 22px rgba(40, 50, 80, 0.38);
}
.float-title {
  height: 30px;
  flex: none;
  display: flex;
  align-items: center;
  background: #34495f;
  color: #fff;
  padding-left: 9px;
}
.float-ic {
  width: 15px;
  height: 15px;
  margin-right: 4px;
}
.float-title strong {
  font-weight: 600;
}
.float-title .win-btns {
  padding-right: 13px;
}
.float-tools {
  height: 29px;
  flex: none;
  background: #d5dbe9;
  padding: 1px 0 0 2px;
  box-sizing: border-box;
}
.pill {
  height: 24px;
  width: 618px;
  background: #dde2ee;
  border-radius: 3px;
}
.formula {
  height: 22px;
  flex: none;
  display: flex;
  gap: 2px;
  background: #d5dbe9;
  padding: 0 3px 0 2px;
}
.formula-input {
  flex: 1;
  height: 19px;
  line-height: 17px;
  box-sizing: border-box;
  background: #efefef;
  border: 1px solid #8e8e8e;
  padding-left: 5px;
}
.formula-btn {
  width: 18px;
  height: 19px;
  background: #dcdcdc;
  display: flex;
  align-items: center;
  justify-content: center;
}
.formula-btn i {
  border: 5px solid transparent;
  border-top: 6px solid #000;
  border-bottom: 0;
}
.sheet-area {
  flex: 1;
  min-height: 0;
  display: grid;
  grid-template-columns: 1fr 15px;
  grid-template-rows: 1fr 16px;
}
.sheet-main {
  position: relative;
  overflow: hidden;
  min-width: 0;
}
.sheet {
  position: relative;
  display: grid;
  grid-template-columns: 30px 59px 74px 84px 64px 132px 122px 123px 33px;
  grid-template-rows: 19px 50px repeat(12, 19px);
  width: 721px;
}
.outline-btns {
  background: #efefef;
  display: flex;
  align-items: center;
  gap: 1px;
  padding-left: 2px;
}
.outline-btns span {
  width: 12px;
  height: 13px;
  line-height: 12px;
  box-sizing: border-box;
  border: 1px solid #9a9a9a;
  text-align: center;
  font-size: 10px;
}
.col-corner {
  background: #efefef;
  border-left: 1px solid #aaa;
}
.col-head {
  background: #efefef;
  border-left: 1px solid #a0a0a0;
  border-bottom: 1px solid #a0a0a0;
  text-align: center;
  line-height: 19px;
  box-sizing: border-box;
  color: #111;
}
.col-head.sel {
  background: linear-gradient(#bcdcfb, #9ecbfb);
  border: 1px solid #4a90e2;
}
.outline-cell {
  background: #efefef;
  border-right: 1px solid #8f8f8f;
  box-sizing: border-box;
  padding: 3px 0 0 3px;
}
.plus-box {
  width: 12px;
  height: 12px;
  box-sizing: border-box;
  border: 1px solid #a5a5a5;
  background:
    linear-gradient(#999, #999) center / 8px 2px no-repeat,
    linear-gradient(#999, #999) center / 2px 8px no-repeat;
}
.multihit {
  position: relative;
  display: flex;
  align-items: center;
  justify-content: center;
  box-sizing: border-box;
  background: linear-gradient(90deg, #c2dffb, #9ecbfb);
  border: 1px solid #4a90e2;
  border-bottom: 1px solid #222;
  color: #2b1a55;
}
.corner {
  position: absolute;
  right: 1px;
  bottom: 1px;
  border-left: 6px solid transparent;
  border-bottom: 6px solid #9b9b9b;
}
.corner.top {
  top: 1px;
  bottom: auto;
  border-bottom: 0;
  border-left: 6px solid transparent;
  border-top: 6px solid #9b9b9b;
}
.green {
  background: #bfffbf;
  border-bottom: 1px solid #111;
  overflow: hidden;
  min-width: 0;
}
.green.active {
  border-right: 2px solid #000;
  border-bottom: 2px solid #000;
  box-sizing: border-box;
}
.green-inner {
  height: 100%;
  box-sizing: border-box;
  padding-top: 2px;
  display: flex;
  flex-direction: column;
  align-items: center;
  justify-content: center;
  font-weight: 700;
  line-height: 16px;
  white-space: nowrap;
}
.green-inner.cut {
  width: 90px;
}
.row-no {
  position: relative;
  background: #efefef;
  border-bottom: 1px solid #8f8f8f;
  border-right: 1px solid #8f8f8f;
  box-sizing: border-box;
  text-align: center;
  line-height: 19px;
  color: #222;
}
.cell {
  border-right: 1px solid #c9d3e6;
  border-bottom: 1px solid #c9d3e6;
  box-sizing: border-box;
  padding: 2px 0 0 3px;
  line-height: 18px;
  white-space: nowrap;
  overflow: hidden;
  color: #111;
}
.sel-handle {
  position: absolute;
  left: 161px;
  top: 67px;
  width: 6px;
  height: 6px;
  background: #000;
}
.dock-guide {
  position: absolute;
  left: 355px;
  top: 79px;
  display: grid;
  grid-template-columns: repeat(3, 32px);
  grid-template-rows: repeat(3, 32px);
  gap: 4px;
}
.folder {
  position: relative;
  display: flex;
  align-items: center;
  justify-content: center;
  background: #b0b0b0;
  border-radius: 2px;
  margin-top: 4px;
  height: 28px;
}
.folder::before {
  content: "";
  position: absolute;
  left: 0;
  top: -4px;
  width: 12px;
  height: 5px;
  background: #b0b0b0;
  border-radius: 2px 2px 0 0;
}
.folder svg {
  width: 10px;
  height: 10px;
}
.sheet-v {
  width: 15px;
}
.sheet-v .thumb {
  height: 211px;
  margin-top: 2px;
}
.hscroll {
  display: flex;
  align-items: center;
  background: #efefef;
  height: 16px;
}
.hscroll svg {
  width: 16px;
  height: 16px;
  flex: none;
}
.hscroll .thumb {
  width: 345px;
  height: 16px;
  background: #c8c8c8;
}
.hscroll .end {
  margin-left: auto;
}
.sheet-corner {
  background: #cfd6e6;
}
</style>
